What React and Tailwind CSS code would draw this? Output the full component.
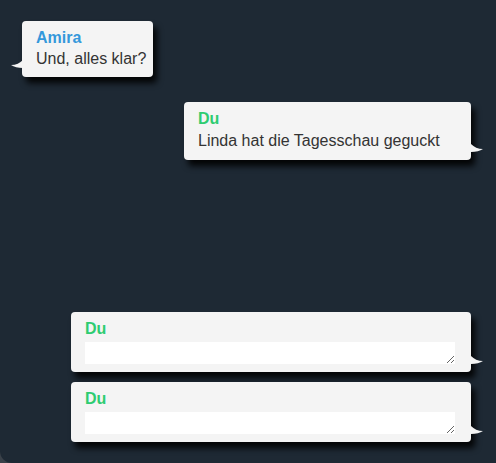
import React from "react";

const font = { fontFamily: '"Liberation Sans", Arial, sans-serif' };

function TailLeft() {
  return (
    <svg
      className="absolute left-[-11px] bottom-[9px]"
      width="12"
      height="8"
      viewBox="0 0 12 8"
    >
      <path d="M12 0 C 9 3, 5 5, 0 5 C 3 7, 7 8, 12 8 Z" fill="#f4f4f4" />
    </svg>
  );
}

function TailRight() {
  return (
    <svg
      className="absolute right-[-12px] bottom-[8px]"
      width="12"
      height="8"
      viewBox="0 0 12 8"
    >
      <path d="M0 0 C 3 3, 7 5, 12 5 C 9 7, 5 8, 0 8 Z" fill="#f4f4f4" />
    </svg>
  );
}

const bubble =
  "relative bg-[#f4f4f4] rounded-[4px] shadow-[4px_6px_6px_rgba(0,0,0,0.9)]";

export default function App() {
  return (
    <div className="w-[496px] h-[463px] bg-[#3a4149]" style={font}>
      <div className="w-full h-full bg-[#1e2934] rounded-bl-[12px] flex flex-col">
        <div className="h-[298px] flex flex-col pt-[21px]">
          <div className="self-start ml-[22px]">
            <div className={`${bubble} w-[131px] pl-[14px] pt-[7px] pb-[7px]`}>
              <TailLeft />
              <div className="text-[16px] leading-[20px] font-bold text-[#3498db]">
                Amira
              </div>
              <div className="text-[16px] leading-[22px] text-[#333]">
                Und, alles klar?
              </div>
            </div>
          </div>
          <div className="self-end mr-[25px] mt-[25px]">
            <div className={`${bubble} w-[287px] pl-[14px] pt-[7px] pb-[8px]`}>
              <TailRight />
              <div className="text-[16px] leading-[20px] font-bold text-[#2ecc71]">
                Du
              </div>
              <div className="text-[16px] leading-[22px] text-[#333] mt-[1px]">
                Linda hat die Tagesschau geguckt
              </div>
            </div>
          </div>
        </div>
        <div className="flex flex-col items-end pr-[25px] pt-[14px] gap-[10px]">
          {[0, 1].map((i) => (
            <div
              key={i}
              className={`${bubble} w-[400px] pl-[14px] pr-[16px] pt-[7px] pb-[8px]`}
            >
              <TailRight />
              <div className="text-[16px] leading-[20px] font-bold text-[#2ecc71]">
                Du
              </div>
              <textarea
                className="block w-full h-[22px] mt-[3px] bg-white p-0 outline-none text-[14px] text-[#333]"
                style={font}
                rows={1}
              />
            </div>
          ))}
        </div>
      </div>
    </div>
  );
}
